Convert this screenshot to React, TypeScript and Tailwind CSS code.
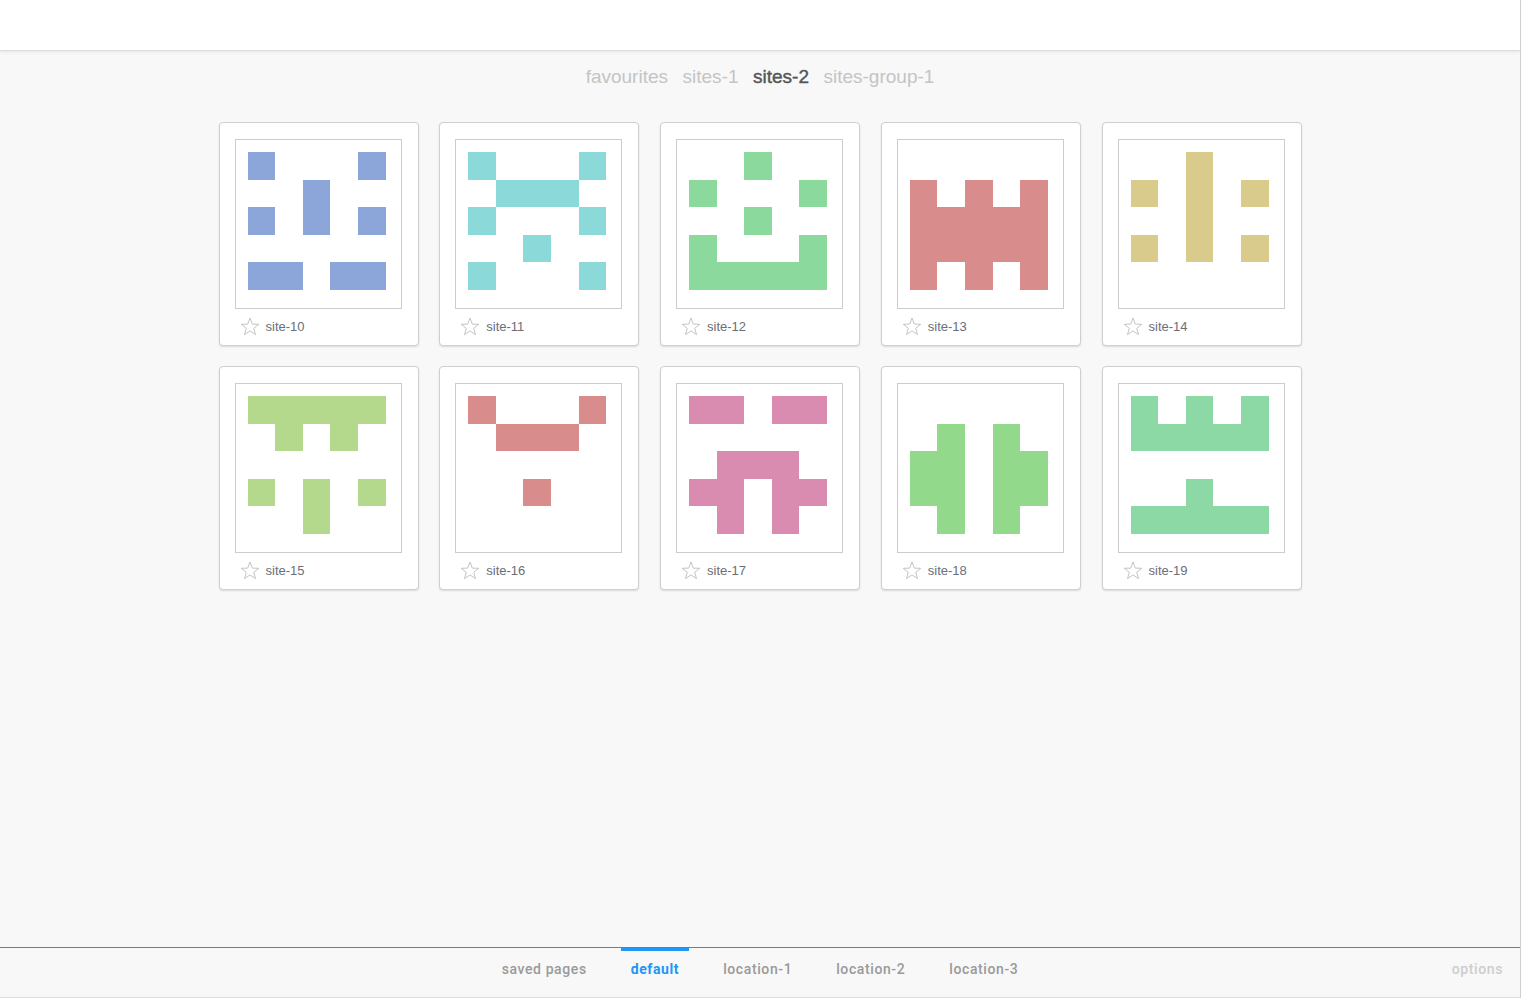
import React from "react";

type Site = { name: string; hue: string; rows: string[] };

const sites: Site[] = [
  { name: "site-10", hue: "#8ca6d9", rows: ["X...X", "..X..", "X.X.X", ".....", "XX.XX"] },
  { name: "site-11", hue: "#8cd9d9", rows: ["X...X", ".XXX.", "X...X", "..X..", "X...X"] },
  { name: "site-12", hue: "#8cd99d", rows: ["..X..", "X...X", "..X..", "X...X", "XXXXX"] },
  { name: "site-13", hue: "#d98c8c", rows: [".....", "X.X.X", "XXXXX", "XXXXX", "X.X.X"] },
  { name: "site-14", hue: "#d9cb8c", rows: ["..X..", "X.X.X", "..X..", "X.X.X", "....."] },
  { name: "site-15", hue: "#b4d98c", rows: ["XXXXX", ".X.X.", ".....", "X.X.X", "..X.."] },
  { name: "site-16", hue: "#d98c8c", rows: ["X...X", ".XXX.", ".....", "..X..", "....."] },
  { name: "site-17", hue: "#d98cb0", rows: ["XX.XX", ".....", ".XXX.", "XX.XX", ".X.X."] },
  { name: "site-18", hue: "#93d98c", rows: [".....", ".X.X.", "XX.XX", "XX.XX", ".X.X."] },
  { name: "site-19", hue: "#8cd9a6", rows: ["X.X.X", "XXXXX", ".....", "..X..", "XXXXX"] },
];

function Star() {
  return (
    <svg width="20" height="19" viewBox="0 0 20 19" className="shrink-0">
      <polygon
        points="10,1 12.3,7.1 18.8,7.3 13.7,11.3 15.5,17.6 10,13.9 4.5,17.6 6.3,11.3 1.2,7.3 7.7,7.1"
        fill="none"
        stroke="#c4c4c4"
        strokeWidth="1"
        strokeLinejoin="miter"
      />
    </svg>
  );
}

function Identicon({ site }: { site: Site }) {
  return (
    <div className="w-[138px] h-[138px] grid grid-cols-5 grid-rows-5">
      {site.rows.flatMap((row, r) =>
        row.split("").map((c, i) => (
          <div key={`${r}-${i}`} style={c === "X" ? { backgroundColor: site.hue } : undefined} />
        ))
      )}
    </div>
  );
}

function Card({ site }: { site: Site }) {
  return (
    <div className="w-[200px] h-[224px] bg-white border border-[#cfcfcf] rounded-[4px] shadow-[0_1px_2px_rgba(0,0,0,0.12)] pl-[15px] pt-[16px] flex flex-col">
      <div className="w-[167px] h-[170px] border border-[#cccccc] bg-white pl-[12px] pt-[12px]">
        <Identicon site={site} />
      </div>
      <div className="flex items-center h-[35px] pl-[5px] gap-[6px]">
        <Star />
        <span className="text-[13px] text-[#6b6e78] font-['Liberation_Sans',Arial,sans-serif] pt-[1px]">
          {site.name}
        </span>
      </div>
    </div>
  );
}

export default function App() {
  const topTabs = ["favourites", "sites-1", "sites-2", "sites-group-1"];
  const bottomTabs = ["saved pages", "default", "location-1", "location-2", "location-3"];
  return (
    <div className="w-[1521px] h-[998px] flex flex-col bg-[#f8f8f8] border-r border-[#cfcfcf] overflow-hidden">
      <div className="h-[51px] shrink-0 bg-white border-b border-[#dddddd] shadow-[0_1px_3px_rgba(0,0,0,0.08)] relative z-10" />
      <div className="flex-1 flex flex-col items-center">
        <div className="flex items-center gap-[14.5px] mt-[14px] h-[24px] text-[19px] font-['Liberation_Sans',Arial,sans-serif]">
          {topTabs.map((t) => (
            <span key={t} className={t === "sites-2" ? "text-[#555555] [-webkit-text-stroke:0.4px_#555555]" : "text-[#c4c4c4]"}>
              {t}
            </span>
          ))}
        </div>
        <div className="mt-[33px] grid grid-cols-5 gap-x-[20.75px] gap-y-[20px]">
          {sites.map((s) => (
            <Card key={s.name} site={s} />
          ))}
        </div>
      </div>
      <div className="h-[51px] shrink-0 border-t border-[#7a7a7a] border-b border-b-[#dedede] bg-[#f8f8f8] relative flex justify-center font-['Roboto',Arial,sans-serif] text-[14px] font-medium tracking-[0.6px]">
        <div className="flex gap-[24px] h-full">
          {bottomTabs.map((t) => (
            <div
              key={t}
              className={
                t === "default"
                  ? "px-[10px] flex items-center border-t-[3px] border-[#2196f3] text-[#2196f3] font-bold pb-[9px]"
                  : "px-[10px] flex items-center border-t-[3px] border-transparent text-[#9a9a9a] pb-[9px]"
              }
            >
              {t}
            </div>
          ))}
        </div>
        <div className="absolute right-[17px] top-0 h-full flex items-center border-t-[3px] border-transparent text-[#cdcdcd] pb-[9px]">options</div>
      </div>
    </div>
  );
}
